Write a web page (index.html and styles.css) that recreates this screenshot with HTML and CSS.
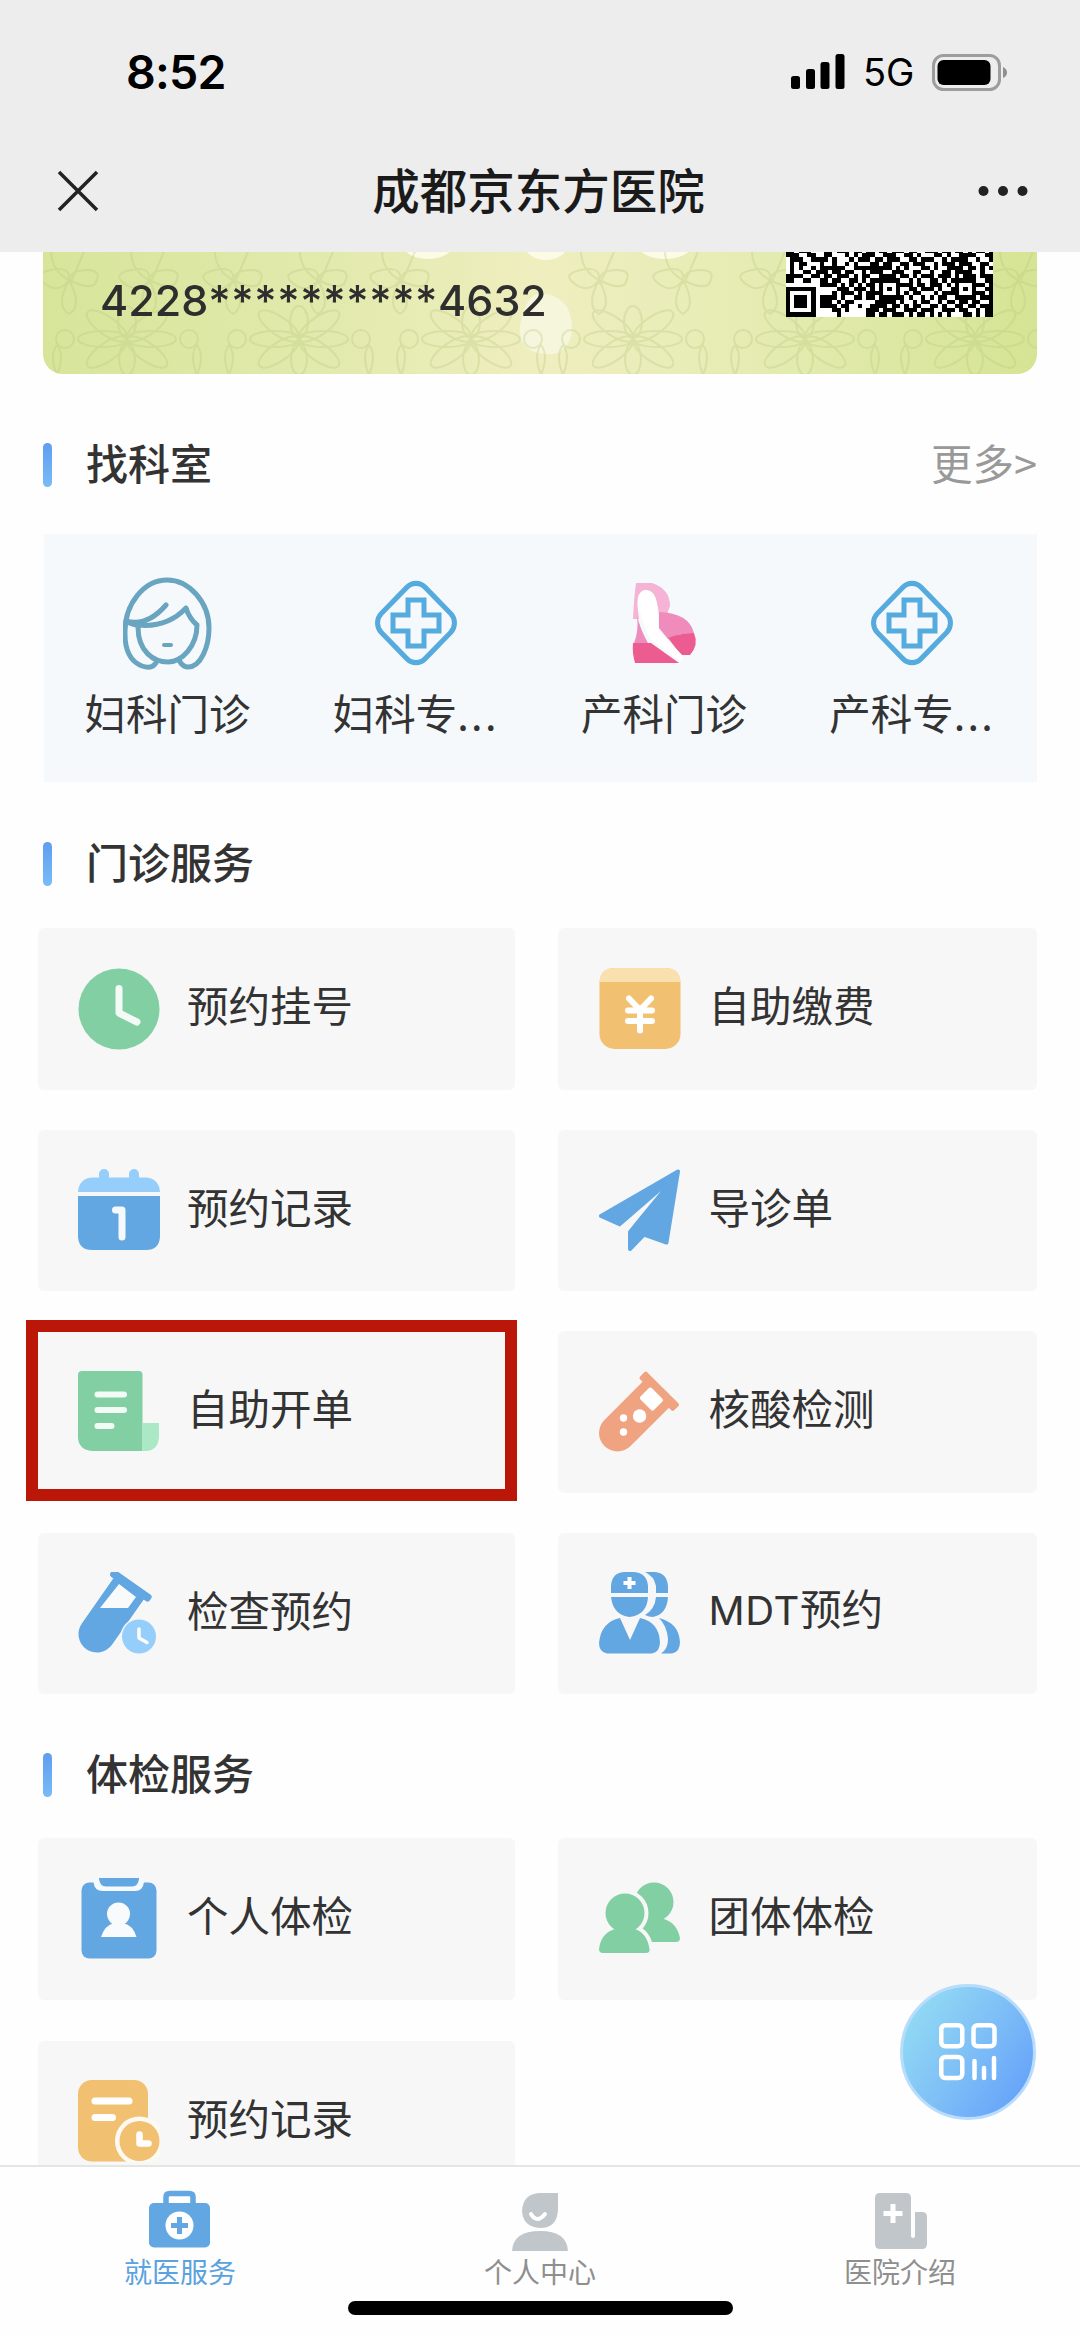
FILE: index.html
```html
<!DOCTYPE html>
<html lang="zh-CN">
<head>
<meta charset="utf-8">
<title>成都京东方医院</title>
<link rel="stylesheet" href="styles.css">
</head>
<body>
<header class="top">
  <div class="status">
    <span class="time">8:52</span>
    <div class="status-right">
      <svg class="signal" viewBox="0 0 54 36"><rect x="0" y="22" width="9" height="13" rx="2.5"/><rect x="15" y="15" width="9" height="20" rx="2.5"/><rect x="29.500" y="8" width="9" height="27" rx="2.500"/><rect x="44.500" y="0" width="9" height="35" rx="2.500"/></svg>
      <span class="net">5G</span>
      <svg class="battery" viewBox="0 0 76 37"><rect x="1.500" y="1.500" width="66" height="34" rx="10" fill="none" stroke="#9d9d9d" stroke-width="3"/><rect x="5.500" y="6" width="53" height="25" rx="6"/><path d="M71 13q4 2 4 5.500t-4 5.500z" fill="#8f8f8f"/></svg>
    </div>
  </div>
  <div class="nav">
    <svg class="close" viewBox="0 0 42 42"><path d="M2 2 40 40M40 2 2 40" fill="none" stroke="#222" stroke-width="3.500"/></svg>
    <h1 class="nav-title">成都京东方医院</h1>
    <svg class="dots" viewBox="0 0 50 12"><circle cx="5.500" cy="6" r="5"/><circle cx="25" cy="6" r="5"/><circle cx="44.500" cy="6" r="5"/></svg>
  </div>
</header>

<main class="content">
  <section class="id-card">
    <svg class="card-art" viewBox="0 0 994 122" preserveAspectRatio="none">
      <defs>
        <g id="flower" fill="none" stroke="#b9c97f" stroke-width="2">
          <ellipse cx="0" cy="-17" rx="9" ry="16"/><ellipse cx="0" cy="20" rx="8" ry="16"/>
          <ellipse cx="-24" cy="0" rx="25" ry="8"/><ellipse cx="24" cy="0" rx="25" ry="8"/>
          <ellipse cx="-20" cy="-13" rx="24" ry="9" transform="rotate(35 -20 -13)"/><ellipse cx="20" cy="-13" rx="24" ry="9" transform="rotate(-35 20 -13)"/>
          <ellipse cx="-20" cy="13" rx="24" ry="9" transform="rotate(-35 -20 13)"/><ellipse cx="20" cy="13" rx="24" ry="9" transform="rotate(35 20 13)"/>
          <circle cx="-62" cy="0" r="9"/><circle cx="62" cy="0" r="9"/>
          <path d="M-70 36q-8-20 0-30q8 10 0 30M70 36q-8-20 0-30q8 10 0 30"/>
        </g>
        <g id="knot" fill="none" stroke="#b9c97f" stroke-width="2">
          <path d="M-18-26Q-20 0 0 10T26 14Q34 0 18 0T0 10Q-10 24-24 14T-18 0T0 10T18-26M0 10q-14 26 0 34q14-8 0-34"/>
        </g>
      </defs>
      <ellipse cx="385" cy="-6" rx="24" ry="13" fill="#fbfbe6"/><ellipse cx="503" cy="-8" rx="22" ry="16" fill="#fbfbe6"/><ellipse cx="622" cy="-6" rx="26" ry="13" fill="#fbfbe6"/>
      <path d="M481 60Q486 38 504 42Q529 48 529 76Q528 98 511 102Q480 104 477 82Q476 70 481 60" fill="#f5f6dc"/>
      <g opacity=".33">
        <use href="#flower" x="84" y="87"/><use href="#flower" x="256" y="87"/><use href="#flower" x="428" y="87"/><use href="#flower" x="590" y="87"/><use href="#flower" x="762" y="87"/><use href="#flower" x="932" y="87"/>
        <use href="#knot" x="26" y="18"/><use href="#knot" x="106" y="18"/><use href="#knot" x="190" y="18"/><use href="#knot" x="275" y="18"/><use href="#knot" x="357" y="18"/><use href="#knot" x="556" y="18"/><use href="#knot" x="640" y="18"/><use href="#knot" x="727" y="18"/><use href="#knot" x="975" y="18"/>
      </g>
    </svg>
    <span class="id-number">4228<span class="mask">**********</span>4632</span>
    <svg class="qr" viewBox="0 33.750 49 15.250" preserveAspectRatio="none" shape-rendering="crispEdges"><rect y="33" width="49" height="16" fill="#fff"/><path id="qr-modules" d=""/></svg>
  </section>

  <div class="section-head first"><i class="bar"></i><h2>找科室</h2><span class="more">更多&gt;</span></div>
  <section class="departments">
    <div class="dept">
      <svg viewBox="0 -3 90 96" class="dept-icon" fill="none" stroke="#69a5c0" stroke-width="5" stroke-linecap="round" stroke-linejoin="round"><path d="M34 83Q30 92 19 88C6 83 2 71 2 56C1 25 22 2 44 2S86 24 86 50C86 68 78 90 64 89Q58 88 56 81"/><path d="M15 49C15 74 31 84 45 84S74 68 74 47Q66 40 63 30Q44 50 15 47Q9 47 3 43Q24 49 43 27"/><path d="M41 67h7" stroke-width="4"/></svg>
      <span>妇科门诊</span>
    </div>
    <div class="dept">
      <svg viewBox="-45 -48 90 96" class="dept-icon" fill="none" stroke="#55aade" stroke-width="5"><rect x="-31" y="-31" width="62" height="62" rx="13" transform="scale(1 1.030) rotate(45)"/><path d="M-8-23H8V-8H23V8H8V23H-8V8H-23V-8H-8z"/></svg>
      <span>妇科专<b class="ell">...</b></span>
    </div>
    <div class="dept">
      <svg viewBox="-13 -8 90 96" class="dept-icon"><path d="M4 0H20Q38 6 38 23L35 31H27Q24 7 14 7Q3 8 6 28L7 36H1Q2 14 4 0z" fill="#f5b3d5"/><path d="M27 29Q57 30 62 50Q47 50 36 56L27 45z" fill="#ef8cbc"/><path d="M5 33Q9 48 16 60H2Q7 48 5 33z" fill="#ef8cbc"/><path d="M36 55Q49 50 62 50Q67 62 58 72H49z" fill="#ec5c91"/><path d="M1 60H19L47 80H3Q0 70 1 60z" fill="#ec5c91"/><path d="M14 7Q24 8 25 22L26 47L51 73Q51 77 48 78L18 56Q6 30 6 15Q8 7 14 7z" fill="#fff"/></svg>
      <span>产科门诊</span>
    </div>
    <div class="dept">
      <svg viewBox="-45 -48 90 96" class="dept-icon" fill="none" stroke="#55aade" stroke-width="5"><rect x="-31" y="-31" width="62" height="62" rx="13" transform="scale(1 1.030) rotate(45)"/><path d="M-8-23H8V-8H23V8H8V23H-8V8H-23V-8H-8z"/></svg>
      <span>产科专<b class="ell">...</b></span>
    </div>
  </section>

  <div class="section-head"><i class="bar"></i><h2>门诊服务</h2></div>
  <section class="services">
    <div class="service">
      <svg class="icon" viewBox="0 0 82 82"><circle cx="41" cy="41" r="40.500" fill="#82cfa4"/><path d="M41 20.500V45L59 54" fill="none" stroke="#f4fbf7" stroke-width="7" stroke-linecap="round" stroke-linejoin="round"/></svg>
      <span>预约挂号</span>
    </div>
    <div class="service">
      <svg class="icon" viewBox="0 0 82 82"><rect x=".5" width="81" height="81" rx="15" fill="#f2c071"/><path d="M.5 14Q1 0 15 0H67Q81 0 81.500 14z" fill="#fae0ae"/><path d="M30 30.500 41 42 52 30.500M29 42.500H53M29 53H53M41 42V62.500" fill="none" stroke="#fff" stroke-width="6" stroke-linecap="round"/></svg>
      <span>自助缴费</span>
    </div>
    <div class="service">
      <svg class="icon" viewBox="0 0 82 82"><path d="M0 23Q1 9 15 8.500H21V5a5 5 0 0 1 10 0V8.500H51V5a5 5 0 0 1 10 0V8.500H67Q81 9 82 23z" fill="#96cefb"/><path d="M0 27H82V68Q81 81 68 81H14Q1 81 0 68z" fill="#62a7e1"/><path d="M37.500 41H44V68" fill="none" stroke="#f6f9fc" stroke-width="7" stroke-linecap="round" stroke-linejoin="round"/></svg>
      <span>预约记录</span>
    </div>
    <div class="service">
      <svg class="icon" viewBox="0 0 82 82"><path d="M79 2.500 2 47 21 55.500 64 20 31 63V80L45 65.500 67.500 73.500z" fill="#62a7e1" stroke="#62a7e1" stroke-width="4" stroke-linejoin="round"/><path d="M62 22 21 57.500 29 62z" fill="#f7f7f7"/></svg>
      <span>导诊单</span>
    </div>
    <div class="service marked">
      <svg class="icon" viewBox="0 0 82 82"><path d="M4 0H61Q64.500 0 64.500 4V80H14Q1 79 0 67V4Q0 0 4 0z" fill="#82cfa4"/><path d="M64.500 52H81V66Q80 79 69 80H64.500z" fill="#abe8c5"/><path d="M19.500 23.500H46M19.500 39H46M19.500 55H33.500" stroke="#f2fbf6" stroke-width="6" stroke-linecap="round"/></svg>
      <span>自助开单</span>
      <i class="mark"></i>
    </div>
    <div class="service">
      <svg class="icon" viewBox="0 0 82 82"><g transform="translate(18.500 62) rotate(45)"><path d="M-18.500 0V-55H18.500V0A18.500 18.500 0 0 1-18.500 0z" fill="#efa381"/><rect x="-24" y="-64" width="48" height="10" rx="2" fill="#efa381"/><rect x="-9.500" y="-56" width="19" height="16" rx="2" fill="#fff"/></g><circle cx="40.600" cy="45" r="6.700" fill="#fff"/><circle cx="24.500" cy="47" r="3.700" fill="#fff"/><circle cx="24.500" cy="61" r="3.700" fill="#fff"/></svg>
      <span>核酸检测</span>
    </div>
    <div class="service">
      <svg class="icon" viewBox="0 0 82 82"><g transform="translate(19 62) rotate(35)" fill="#62a7e1"><path d="M-18.500 0V-56H18.500V0A18.500 18.500 0 0 1-18.500 0z"/><rect x="-24" y="-63" width="48" height="8" rx="3"/></g><path d="M41 12 22 36H50L58 25z" fill="#f9fafb"/><circle cx="61" cy="64.500" r="18.500" fill="#f7f7f7"/><circle cx="61" cy="64.500" r="17" fill="#96cefb"/><path d="M61 57V66L69 70.500" fill="none" stroke="#fff" stroke-width="3.500" stroke-linecap="round" stroke-linejoin="round"/></svg>
      <span>检查预约</span>
    </div>
    <div class="service">
      <svg class="icon" viewBox="0 0 82 82" fill="#62a7e1"><path d="M12 21V14Q13 0 26 0H35Q48 1 49 14V21z"/><path d="M12 25H49Q48 43 30.500 45Q14 43 12 25z"/><path d="M46 0H56Q68 1 69 14V21H57V14Q55 4 46 0z"/><path d="M57 25H69Q68 42 54 45Q50 45 46 43Q56 37 57 25z"/><path d="M21 46 31 68 41 46Q60 50 61 70Q61 80 53 81.500H8Q0 80 0 71Q2 50 21 46z"/><path d="M60 46Q80 51 81 70Q81 80 73 81.500H62Q69 77 69 67Q68 54 60 46z"/><path d="M30.500 5V17M24.500 11H36.500" stroke="#fff" stroke-width="4"/></svg>
      <span><b class="latin">MDT</b>预约</span>
    </div>
  </section>

  <div class="section-head checkup"><i class="bar"></i><h2>体检服务</h2></div>
  <section class="services checkups">
    <div class="service">
      <svg class="icon" viewBox="0 0 82 82"><rect x="3.500" y="4.500" width="75" height="76" rx="8" fill="#62a7e1"/><path d="M15.500 4V0H66V4Q65 13 57 13H25Q16 13 15.500 4z" fill="#f5fafe"/><path d="M21 0H61V1Q60 8.500 54 8.500H28Q22 8.500 21 1z" fill="#62a7e1"/><circle cx="40.500" cy="36" r="11.500" fill="#f8fafc"/><path d="M23 59Q27 47 36 45H45Q55 47 58.500 59z" fill="#f8fafc"/></svg>
      <span>个人体检</span>
    </div>
    <div class="service">
      <svg class="icon" viewBox="0 0 82 82" fill="#82cfa4"><circle cx="55" cy="24" r="19.500"/><path d="M44 36H65V41Q78 45 81 60Q81 64 77 64H50L38 48z"/><g stroke="#f7f7f7" stroke-width="8" stroke-linejoin="round"><circle cx="26" cy="35" r="19.500"/><path d="M16 51Q2 55 0 71Q0 75 4 75H47Q51 75 50.500 71Q48 55 36 51z"/></g><circle cx="26" cy="35" r="19.500"/><path d="M16 48V51Q2 55 0 71Q0 75 4 75H47Q51 75 50.500 71Q48 55 36 51V48z"/></svg>
      <span>团体体检</span>
    </div>
    <div class="service">
      <svg class="icon" viewBox="0 0 82 82"><rect width="70" height="81.500" rx="14" fill="#f2c071"/><path d="M17 21H51M17 37.500H34.500" stroke="#fff" stroke-width="7" stroke-linecap="round"/><circle cx="61.500" cy="61" r="24.500" fill="#fdfaf4"/><circle cx="61.500" cy="61" r="20" fill="#f2c071"/><path d="M61.500 54.500V63.500H70.500" fill="none" stroke="#fff" stroke-width="6.500" stroke-linecap="round" stroke-linejoin="round"/></svg>
      <span>预约记录</span>
    </div>
  </section>
</main>

<footer class="tabs">
  <nav class="tab-row">
    <div class="tab active">
      <svg class="tab-icon" viewBox="0 0 62 62"><rect x="0" y="16" width="61" height="44.500" rx="5" fill="#62a7e1"/><path d="M17 17V10Q17 6.500 21 6.500H40Q44 6.500 44 10V17" fill="none" stroke="#62a7e1" stroke-width="5.500"/><circle cx="30.500" cy="38.500" r="14" fill="#fff"/><path d="M30.500 30V47M22 38.500H39" stroke="#62a7e1" stroke-width="5"/></svg>
      <span>就医服务</span>
    </div>
    <div class="tab">
      <svg class="tab-icon" viewBox="0 0 62 62" fill="#c1c6cb"><path d="M49 6V23Q48 41 31 41Q14 40 13 24Q14 6 32 6z"/><path d="M3 64Q4 44 31 44T59 64z"/><path d="M22 27Q28 37 36 27" fill="none" stroke="#fff" stroke-width="4" stroke-linecap="round"/></svg>
      <span>个人中心</span>
    </div>
    <div class="tab">
      <svg class="tab-icon" viewBox="0 0 62 62" fill="#c1c6cb"><path d="M11 6H37Q42 6 42 11V25H53Q58 25 58 30V57Q58 62 53 62H11Q6 62 6 57V11Q6 6 11 6z"/><path d="M44 25V49" stroke="#fff" stroke-width="4" stroke-linecap="round"/><path d="M24 17V36M14.500 26.500H33.500" stroke="#fff" stroke-width="5"/></svg>
      <span>医院介绍</span>
    </div>
  </nav>
  <i class="home"></i>
</footer>

<div class="fab">
  <svg viewBox="0 0 58 58" fill="none" stroke="#fff" stroke-width="4.500" stroke-linecap="round"><rect x="2.250" y="2.250" width="21" height="21" rx="4"/><rect x="34.500" y="2.250" width="21" height="21" rx="4"/><rect x="2.250" y="34" width="21" height="21" rx="4"/><path d="M35.500 38V55M45 45V55M55 35V55"/></svg>
</div>
<script src="qr.js"></script>
</body>
</html>
```
FILE: qr.js
```js
// Visible lower rows of the patient's 49-module code, starting at row 33.
const firstRow = 33;
const rows = [
  '1101110 0 01101110110110 11011 1011001110110 11010 1101',
  '1110011 0 01100010101110 01110 0110100011010 01111 0011',
  '0111001 1 11010001011101 10111 0011011100101 11100 1001',
  '0101100 0 10010010100011 01100 1101110010111 01110 0110',
  '0101001 0 11111100111111 11101 0100011010011 11011 0101',
  '0100110 1 11011011001011 10011 1001100100110 11110 0100',
  '1111001 1 01101110101100 11110 1101011101110 10111 0111',
  '1100110 0 11011001101011 11111 0010100110101 11111 0011',
  '0000000 0 11110101010110 10001 1110110111010 10001 1101',
  '1111111 0 00001110111010 10101 0011011101001 10101 0011',
  '1000001 0 00010111010111 10001 0101100010111 10001 1101',
  '1011101 0 11110100110110 11111 1010010101100 11111 0111',
  '1011101 0 11101011000001 11110 1001011001011 01101 1001',
  '1011101 0 11110110010011 11011 0101100110100 11011 0111',
  '1000001 0 00011010000111 01110 0111011100111 01100 1011',
  '1111111 0 00001000000110 11011 1010110101010 00110 1011'
];
let d = '';
rows.forEach((row, r) => {
  [...row.replace(/ /g, '')].forEach((bit, c) => {
    if (bit === '1') d += `M${c} ${firstRow + r}h1v1h-1z`;
  });
});
document.getElementById('qr-modules').setAttribute('d', d);
```
FILE: styles.css
```css
* { box-sizing: border-box; margin: 0; padding: 0; }
body {
  position: relative;
  display: flex;
  flex-direction: column;
  width: 1080px;
  height: 2337px;
  overflow: hidden;
  background: #fefefe;
  color: #333;
  font-family: "Noto Sans CJK SC", sans-serif;
}
svg { display: block; flex: none; }
i { font-style: normal; }

.top { flex: none; height: 252px; padding-top: 44px; background: #ededed; color: #000; }
.status { display: flex; justify-content: space-between; align-items: center; height: 56px; padding: 0 72px 0 126px; }
.time { font: 600 46.5px/56px Inter, sans-serif; letter-spacing: -0.8px; }
.status-right { display: flex; align-items: center; }
.signal { width: 54px; height: 36px; margin-right: 18px; }
.net { width: 52px; margin-right: 17px; font: 400 38px/56px Inter, sans-serif; }
.battery { width: 76px; height: 37px; }
.nav { display: flex; justify-content: space-between; align-items: center; height: 72px; margin-top: 55px; padding: 0 52px 0 57px; }
.close { width: 42px; height: 42px; }
.nav-title { padding-bottom: 5px; color: #1a1a1a; font-size: 47.5px; font-weight: 500; line-height: 67px; }
.dots { width: 50px; height: 12px; fill: #222; }

.content { flex: none; height: 1913px; overflow: hidden; }
.id-card {
  position: relative;
  display: flex;
  justify-content: space-between;
  height: 122px;
  margin: 0 43px;
  padding: 0 44px 0 57px;
  overflow: hidden;
  border-radius: 0 0 20px 20px;
  background: linear-gradient(90deg, #d7e59a, #e3eaae 30%, #efeebf 50%, #e6ecb4 70%, #d5e494);
}
.card-art { position: absolute; inset: 0; width: 100%; height: 100%; }
.id-number { position: relative; padding-top: 18px; color: #2e2e2e; font: 500 43px/60px Inter, sans-serif; }
.mask { letter-spacing: 0.6px; }
.qr { position: relative; width: 207px; height: 64.5px; }

.section-head { display: flex; align-items: center; height: 44px; margin: 60px 43px 42px 43px; }
.section-head.first { margin: 69px 43px 47px 43px; }
.section-head.checkup { margin: 59px 43px 41px 43px; }
.bar { width: 9px; height: 44px; border-radius: 4.5px; background: linear-gradient(#5f9df0, #78bcf6); }
.section-head h2 { margin-left: 34px; padding-bottom: 6px; font-size: 42px; font-weight: 500; line-height: 38px; }
.more { margin-left: auto; padding-bottom: 6px; color: #999; font-size: 41.5px; line-height: 38px; }

.departments { display: grid; grid-template-columns: repeat(4, 248.2px); height: 248px; margin: 0 43.5px; background: #f5f9fc; }
.dept { display: flex; flex-direction: column; align-items: center; padding-top: 41px; font-size: 41.5px; line-height: 60px; }
.dept-icon { width: 90px; height: 96px; margin-bottom: 11px; }
.ell { font-weight: 400; letter-spacing: 2.3px; }

.services { display: grid; grid-template-columns: 477px 479px; grid-auto-rows: 161.5px; gap: 40px 43px; margin: 0 43px 0 38px; }
.checkups { row-gap: 41px; }
.service { display: flex; align-items: center; gap: 27.5px; padding-left: 39.5px; border-radius: 6px; background: #f7f7f7; font-size: 41.5px; line-height: 60px; }
.service:nth-child(even) { gap: 28px; padding-left: 40.5px; }
.service span { padding-bottom: 9px; }
.latin { font: 400 40px/60px Inter, sans-serif; letter-spacing: 0.6px; }
.icon { width: 82px; height: 82px; }
.marked { position: relative; }
.mark { position: absolute; left: -12.5px; top: -11px; width: 491px; height: 181px; border: 12.5px solid #bb1708; }

.tabs { flex: none; height: 172px; border-top: 2px solid #e4e6e6; background: #fefefe; }
.tab-row { display: grid; grid-template-columns: repeat(3, 1fr); height: 134px; }
.tab { display: flex; flex-direction: column; align-items: center; padding-top: 20px; color: #8f8f8f; font-size: 28px; line-height: 40px; }
.tab.active { color: #5aa2e0; }
.tab-icon { width: 62px; height: 62px; overflow: visible; margin-bottom: 2px; }
.home { display: block; width: 385px; height: 14px; margin: 0 auto; border-radius: 7px; background: #000; }

.fab { position: absolute; left: 900px; top: 1984px; display: flex; align-items: center; justify-content: center; width: 136px; height: 136px; border: 3px solid #b9dcfb; border-radius: 50%; background: linear-gradient(125deg, #93dcf4 8%, #7fc0f6 50%, #64a1fa 92%); }
.fab svg { width: 58px; height: 58px; }
```
